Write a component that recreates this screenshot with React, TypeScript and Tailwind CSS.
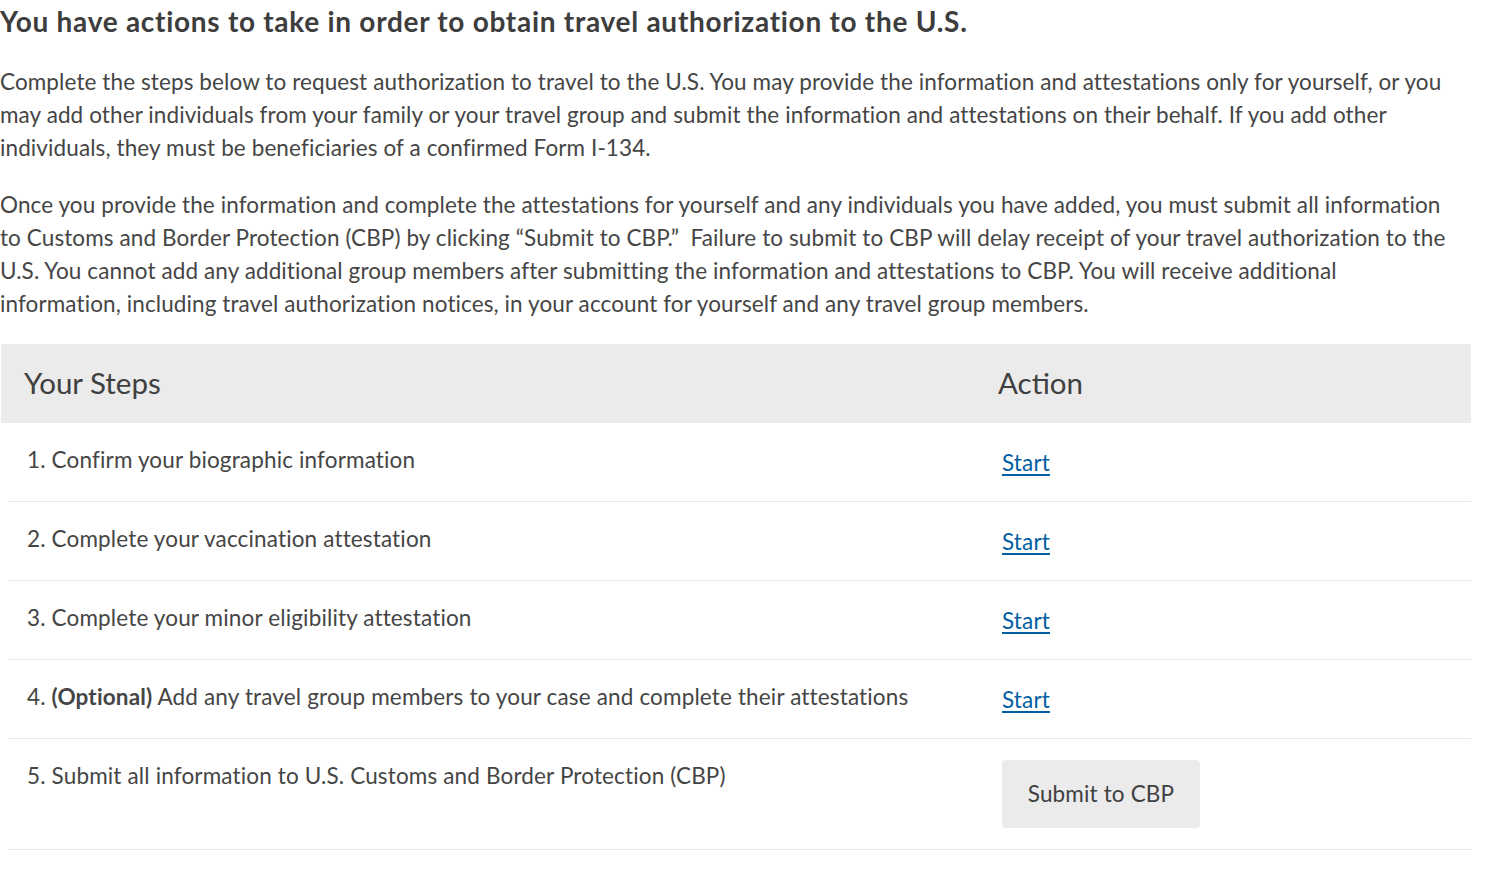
import React from "react";

type Step = {
  id: number;
  label: React.ReactNode;
  kind: "link" | "button";
};

const steps: Step[] = [
  { id: 1, label: "1. Confirm your biographic information", kind: "link" },
  { id: 2, label: "2. Complete your vaccination attestation", kind: "link" },
  { id: 3, label: "3. Complete your minor eligibility attestation", kind: "link" },
  {
    id: 4,
    label: (
      <>
        4. <b className="font-bold">(Optional)</b> Add any travel group members to your case and complete their
        attestations
      </>
    ),
    kind: "link",
  },
  {
    id: 5,
    label: "5. Submit all information to U.S. Customs and Border Protection (CBP)",
    kind: "button",
  },
];

export default function App() {
  return (
    <div
      className="w-[1472px] bg-white text-[#454545]"
      style={{ fontFamily: "Lato, 'Noto Sans', sans-serif" }}
    >
      <h1 className="pt-[4px] text-[28px] font-bold leading-[34px] tracking-[0.72px] text-[#3d3d3d]">
        You have actions to take in order to obtain travel authorization to the U.S.
      </h1>

      <p className="mt-[27px] text-[22.5px] leading-[33px] tracking-[0.1px]">
        Complete the steps below to request authorization to travel to the U.S. You may provide the information and
        attestations only for yourself, or you
        <br />
        may add other individuals from your family or your travel group and submit the information and attestations on
        their behalf. If you add other
        <br />
        individuals, they must be beneficiaries of a confirmed Form I-134.
      </p>

      <p className="mt-[24px] text-[22.5px] leading-[33px] tracking-[0.1px]">
        Once you provide the information and complete the attestations for yourself and any individuals you have added,
        you must submit all information
        <br />
        to Customs and Border Protection (CBP) by clicking “Submit to CBP.”&nbsp; Failure to submit to CBP will delay
        receipt of your travel authorization to the
        <br />
        U.S. You cannot add any additional group members after submitting the information and attestations to CBP. You
        will receive additional
        <br />
        information, including travel authorization notices, in your account for yourself and any travel group members.
      </p>

      <div className="ml-px mt-[24px] w-[1470px]">
        <div className="grid h-[79px] grid-cols-[974px_1fr] items-center bg-[#ebebeb] text-[29.5px] text-[#404040]">
          <div className="pl-[23px]">Your Steps</div>
          <div className="pl-[23px]">Action</div>
        </div>

        {steps.map((s) => (
          <div
            key={s.id}
            className={`ml-[7px] grid grid-cols-[975px_1fr] border-b border-[#e6e6e6] text-[22.5px] tracking-[0.15px] ${
              s.kind === "button" ? "h-[111px]" : "h-[79px]"
            }`}
          >
            <div className="pl-[19px] pt-[23px] leading-[28px]">{s.label}</div>
            <div className="pl-[19px]">
              {s.kind === "link" ? (
                <a
                  href="#"
                  className="mt-[26px] inline-block leading-[28px] text-[#005ea2] underline underline-offset-[3px]"
                >
                  Start
                </a>
              ) : (
                <button className="mt-[21px] h-[68px] w-[198px] rounded-[4px] bg-[#ebebeb] text-[22.5px] text-[#404040]">
                  Submit to CBP
                </button>
              )}
            </div>
          </div>
        ))}
      </div>
    </div>
  );
}
